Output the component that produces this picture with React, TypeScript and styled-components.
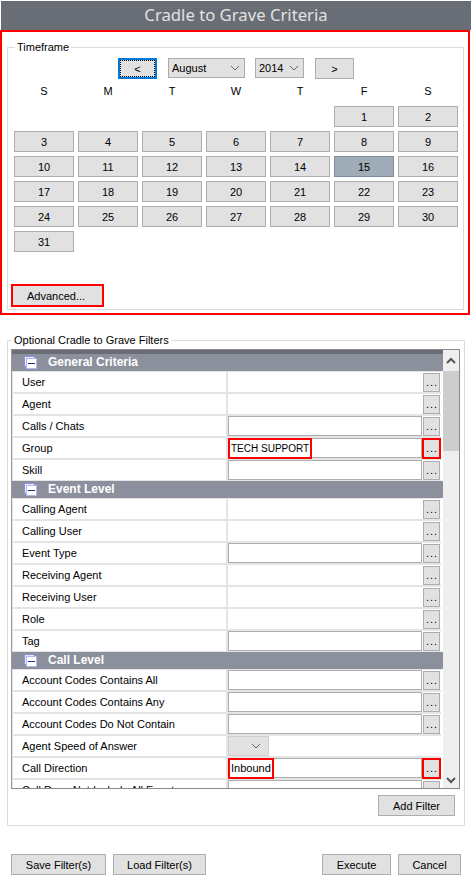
import React from 'react';
import styled, { createGlobalStyle } from 'styled-components';

const GlobalStyle = createGlobalStyle`
  html, body {
    margin: 0;
    padding: 0;
    background: #ffffff;
  }

  body {
    font-family: "Liberation Sans", Tahoma, sans-serif;
    font-size: 11px;
    color: #000000;
  }

  * {
    box-sizing: border-box;
  }
`;

type Filter = { label: string; kind: 'plain' | 'input' | 'select'; value?: string; flagged?: boolean };

const generalCriteria: Filter[] = [
  { label: 'User', kind: 'plain' },
  { label: 'Agent', kind: 'plain' },
  { label: 'Calls / Chats', kind: 'input' },
  { label: 'Group', kind: 'input', value: 'TECH SUPPORT', flagged: true },
  { label: 'Skill', kind: 'input' },
];

const eventLevel: Filter[] = [
  { label: 'Calling Agent', kind: 'plain' },
  { label: 'Calling User', kind: 'plain' },
  { label: 'Event Type', kind: 'input' },
  { label: 'Receiving Agent', kind: 'plain' },
  { label: 'Receiving User', kind: 'plain' },
  { label: 'Role', kind: 'plain' },
  { label: 'Tag', kind: 'input' },
];

const callLevel: Filter[] = [
  { label: 'Account Codes Contains All', kind: 'input' },
  { label: 'Account Codes Contains Any', kind: 'input' },
  { label: 'Account Codes Do Not Contain', kind: 'input' },
  { label: 'Agent Speed of Answer', kind: 'select' },
  { label: 'Call Direction', kind: 'input', value: 'Inbound', flagged: true },
  { label: 'Call Does Not Include All Events', kind: 'input' },
];

const weekdays = ['S', 'M', 'T', 'W', 'T', 'F', 'S'];
const days = Array.from({ length: 31 }, (_, i) => i + 1);

const Chevron = () => (
  <svg width="10" height="6" viewBox="0 0 10 6" fill="none">
    <path d="M1 1l4 4 4-4" stroke="#666666" strokeWidth="1" />
  </svg>
);

const CollapseIcon = () => (
  <svg width="13" height="13" viewBox="0 0 13 13" shapeRendering="crispEdges">
    <rect x="0.5" y="0.5" width="10" height="10" fill="#e8e8ff" stroke="#8f8fe8" />
    <rect x="2.5" y="2.5" width="10" height="10" fill="#ffffff" stroke="#b5b5f0" />
    <rect x="4" y="7" width="7" height="1" fill="#1c2f7a" />
  </svg>
);

const FilterSection = ({ title, rows }: { title: string; rows: Filter[] }) => (
  <>
    <GroupHeader>
      <CollapseIcon />
      <GroupTitle>{title}</GroupTitle>
    </GroupHeader>
    {rows.map((row) => (
      <Row key={row.label}>
        <RowLabel>{row.label}</RowLabel>
        <RowValue>
          {row.kind === 'select' ? (
            <SmallSelect>
              <Chevron />
            </SmallSelect>
          ) : (
            <>
              <ValueBox $kind={row.kind}>
                {row.value && <Flagged $caps={row.value === row.value.toUpperCase()}>{row.value}</Flagged>}
              </ValueBox>
              <DotsButton $flagged={row.flagged}>...</DotsButton>
            </>
          )}
        </RowValue>
      </Row>
    ))}
  </>
);

const App = () => (
  <Page>
    <GlobalStyle />
    <TitleBar>Cradle to Grave Criteria</TitleBar>
    <Highlighted>
      <Timeframe>
        <Legend>Timeframe</Legend>
        <MonthNav>
          <NavButton $focused>&lt;</NavButton>
          <Combo $width={77}>
            August
            <Chevron />
          </Combo>
          <Combo $width={49}>
            2014
            <Chevron />
          </Combo>
          <NavButton>&gt;</NavButton>
        </MonthNav>
        <Weekdays>
          {weekdays.map((day, i) => (
            <span key={i}>{day}</span>
          ))}
        </Weekdays>
        <DayGrid>
          {days.map((day) => (
            <DayButton key={day} $first={day === 1} $selected={day === 15}>
              {day}
            </DayButton>
          ))}
        </DayGrid>
        <AdvancedButton>Advanced...</AdvancedButton>
      </Timeframe>
    </Highlighted>

    <Filters>
      <Legend>Optional Cradle to Grave Filters</Legend>
      <ListFrame>
        <ListBody>
          <DarkStrip />
          <FilterSection title="General Criteria" rows={generalCriteria} />
          <FilterSection title="Event Level" rows={eventLevel} />
          <FilterSection title="Call Level" rows={callLevel} />
        </ListBody>
        <Scrollbar>
          <ScrollArrow>
            <svg width="10" height="7" viewBox="0 0 10 7" fill="none">
              <path d="M1 6l4-4 4 4" stroke="#555555" strokeWidth="2" />
            </svg>
          </ScrollArrow>
          <ScrollThumb />
          <ScrollArrow $bottom>
            <svg width="10" height="7" viewBox="0 0 10 7" fill="none">
              <path d="M1 1l4 4 4-4" stroke="#555555" strokeWidth="2" />
            </svg>
          </ScrollArrow>
        </Scrollbar>
      </ListFrame>
      <AddRow>
        <ActionButton $width={77}>Add Filter</ActionButton>
      </AddRow>
    </Filters>

    <Footer>
      <FooterGroup>
        <ActionButton $width={95}>Save Filter(s)</ActionButton>
        <ActionButton $width={93}>Load Filter(s)</ActionButton>
      </FooterGroup>
      <FooterGroup>
        <ActionButton $width={69}>Execute</ActionButton>
        <ActionButton $width={63}>Cancel</ActionButton>
      </FooterGroup>
    </Footer>
  </Page>
);

const Page = styled.div`
  width: 472px;
  height: 888px;
  padding-top: 1px;
  overflow: hidden;
`;

const TitleBar = styled.div`
  height: 29px;
  margin: 0 1px;
  background: #696d75;
  color: #e2e2e2;
  font-family: "Noto Sans", Tahoma, sans-serif;
  font-size: 16.7px;
  line-height: 28px;
  text-align: center;
`;

const Highlighted = styled.div`
  width: 470px;
  height: 285px;
  border: 2px solid #ff0000;
  padding: 9px 4px 0 5px;
`;

const Legend = styled.legend`
  margin-left: 1px;
  padding: 0 2px;
  font-size: 11px;
  line-height: 13px;
`;

const Timeframe = styled.fieldset`
  height: 269px;
  margin: 0;
  padding: 4px 6px 0;
  border: 1px solid #dcdcdc;
  min-width: 0;
`;

const MonthNav = styled.div`
  display: flex;
  align-items: flex-start;
  margin-left: 103px;
  gap: 10px;
`;

const NavButton = styled.div<{ $focused?: boolean }>`
  width: 39px;
  height: 21px;
  margin: 0 1px;
  display: flex;
  align-items: center;
  justify-content: center;
  background: #e1e1e1;
  border: ${({ $focused }) => ($focused ? '2px solid #0078d7' : '1px solid #adadad')};
  outline: ${({ $focused }) => ($focused ? '1px dotted #000000' : 'none')};
  outline-offset: -3px;
`;

const Combo = styled.div<{ $width: number }>`
  width: ${({ $width }) => $width}px;
  height: 20px;
  display: flex;
  align-items: center;
  justify-content: space-between;
  padding: 0 4px 0 3px;
  background: #e1e1e1;
  border: 1px solid #adadad;
`;

const Weekdays = styled.div`
  display: grid;
  grid-template-columns: repeat(7, 60px);
  column-gap: 4px;
  margin-top: 5px;
  height: 22px;
  line-height: 14px;
  text-align: center;
`;

const DayGrid = styled.div`
  display: grid;
  grid-template-columns: repeat(7, 60px);
  grid-auto-rows: 21px;
  gap: 4px;
  height: 173px;
`;

const DayButton = styled.div<{ $first?: boolean; $selected?: boolean }>`
  grid-column-start: ${({ $first }) => ($first ? 6 : 'auto')};
  display: flex;
  align-items: center;
  justify-content: center;
  background: ${({ $selected }) => ($selected ? '#a0acb7' : '#e1e1e1')};
  border: 1px solid ${({ $selected }) => ($selected ? '#7f8d9b' : '#adadad')};
`;

const AdvancedButton = styled.div`
  width: 93px;
  height: 23px;
  margin: 5px 0 0 -3px;
  padding-right: 3px;
  display: flex;
  align-items: center;
  justify-content: center;
  background: #e1e1e1;
  border: 2px solid #ff0000;
`;

const Filters = styled.fieldset`
  width: 458px;
  height: 492px;
  margin: 19px 0 0 7px;
  padding: 0 4px 0 3px;
  border: 1px solid #dcdcdc;
  min-width: 0;
`;

const ListFrame = styled.div`
  height: 440px;
  display: flex;
  margin-top: 2px;
  border: 1px solid #8a8a8a;
  border-left-color: #9a9a9a;
`;

const ListBody = styled.div`
  flex: 1;
  overflow: hidden;
`;

const DarkStrip = styled.div`
  height: 4px;
  background: #696d75;
`;

const GroupHeader = styled.div`
  height: 17px;
  display: flex;
  align-items: center;
  padding: 0 0 1px 12px;
  background: #8b909c;
`;

const GroupTitle = styled.span`
  margin: 0 0 1px 11px;
  color: #ffffff;
  font-size: 12px;
  font-weight: bold;
`;

const Row = styled.div`
  height: 22px;
  display: flex;
  margin-right: 2px;
  border-top: 1px solid #e4e4e4;
  border-bottom: 1px solid #e4e4e4;
  border-left: 1px solid #e4e4e4;
`;

const RowLabel = styled.div`
  width: 215px;
  padding-left: 9px;
  line-height: 20px;
  border-right: 2px solid #e4e4e4;
  white-space: nowrap;
`;

const RowValue = styled.div`
  flex: 1;
  display: flex;
  align-items: center;
  position: relative;
  background: #ffffff;
`;

const ValueBox = styled.div<{ $kind: 'plain' | 'input' }>`
  width: 194px;
  height: 20px;
  display: flex;
  border: ${({ $kind }) => ($kind === 'input' ? '1px solid #adadad' : 'none')};
`;

const Flagged = styled.span<{ $caps?: boolean }>`
  margin: -1px;
  height: 21px;
  padding: 0 1px 0 1px;
  font-size: ${({ $caps }) => ($caps ? '10px' : '11px')};
  line-height: 17px;
  border: 2px solid #ff0000;
`;

const DotsButton = styled.div<{ $flagged?: boolean }>`
  width: ${({ $flagged }) => ($flagged ? '19px' : '17px')};
  height: ${({ $flagged }) => ($flagged ? '21px' : '19px')};
  margin-left: ${({ $flagged }) => ($flagged ? '0' : '1px')};
  display: flex;
  align-items: center;
  justify-content: center;
  padding-left: 1px;
  letter-spacing: 1px;
  background: #e1e1e1;
  border: ${({ $flagged }) => ($flagged ? '2px solid #ff0000' : '1px solid #adadad')};
`;

const SmallSelect = styled.div`
  width: 41px;
  height: 20px;
  display: flex;
  align-items: center;
  justify-content: flex-end;
  padding-right: 7px;
  background: #e1e1e1;
  border: 1px solid #d0d0d0;
`;

const Scrollbar = styled.div`
  width: 16px;
  flex-shrink: 0;
  display: flex;
  flex-direction: column;
  background: #efefef;
`;

const ScrollArrow = styled.div<{ $bottom?: boolean }>`
  height: 21px;
  display: flex;
  align-items: center;
  justify-content: center;
  margin-top: ${({ $bottom }) => ($bottom ? 'auto' : '0')};
  padding-top: ${({ $bottom }) => ($bottom ? '5px' : '0')};
`;

const ScrollThumb = styled.div`
  height: 80px;
  background: #cdcdcd;
`;

const AddRow = styled.div`
  display: flex;
  justify-content: flex-end;
  padding: 6px 5px 0 0;
`;

const ActionButton = styled.div<{ $width: number }>`
  width: ${({ $width }) => $width}px;
  height: 21px;
  display: flex;
  align-items: center;
  justify-content: center;
  background: #e1e1e1;
  border: 1px solid #adadad;
`;

const Footer = styled.div`
  display: flex;
  justify-content: space-between;
  margin-top: 28px;
  padding: 0 11px;
`;

const FooterGroup = styled.div`
  display: flex;
  gap: 7px;
`;

export default App;
